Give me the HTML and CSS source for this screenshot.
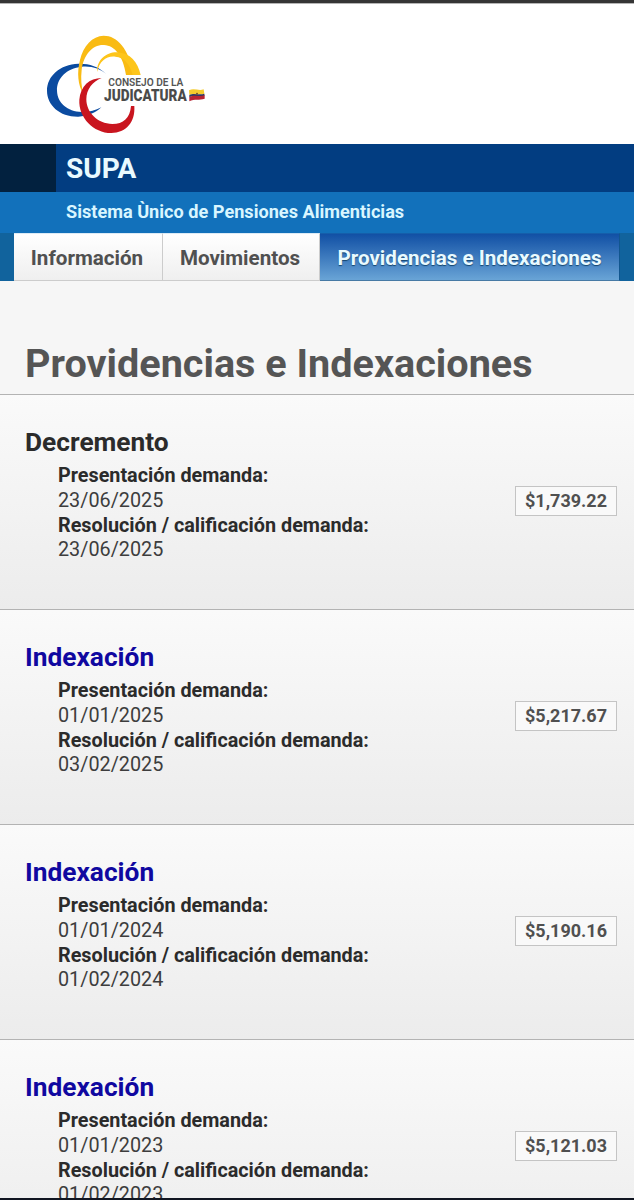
FILE: index.html
```html
<!DOCTYPE html>
<html lang="es">
<head>
	<meta charset="utf-8">
	<title>SUPA - Providencias e Indexaciones</title>
	<link rel="stylesheet" href="styles.css">
</head>
<body>
	<div class="page">
		<header class="logo-bar">
			<svg class="logo" viewBox="0 0 600 375" role="img" aria-label="Consejo de la Judicatura">
				<path fill="#0b4ba0" d="M230 163C205 138 175 130 145 131C90 133 51 168 51 212C51 256 90 291 145 290C173 289 197 278 214 262C195 272 175 277 155 276C112 274 82 249 81 212C80 175 109 145 155 140C185 137 210 146 230 163Z"/>
				<path fill="#f9bb13" d="M160 222C144 195 140 158 150 120C160 77 187 48 221 47C262 47 296 85 312 165L288 165C280 110 255 76 222 75C188 73 160 105 155 150C152 175 154 200 160 222Z"/>
				<path fill="#fdc51b" d="M201 156C200 120 228 96 262 97C301 99 323 126 332 165L308 165C300 132 283 113 256 110C229 107 209 123 201 156Z"/>
				<path fill="#c9151f" d="M215 174C178 174 151 199 148 239C145 292 190 339 244 339C288 338 316 308 313 258L303 258C300 295 280 312 247 312C202 311 169 277 169 238C169 208 187 185 215 174Z"/>
				<text class="logo-small" x="235" y="198" textLength="225" lengthAdjust="spacingAndGlyphs">CONSEJO DE LA</text>
				<text class="logo-big" x="222" y="243" textLength="248" lengthAdjust="spacingAndGlyphs">JUDICATURA</text>
				<path fill="#f4cb2d" d="M477 211C492 203 506 214 521 208L523 221C507 227 493 217 478 225Z"/>
				<path fill="#313a61" d="M478 225C493 217 507 227 523 221L524 227C508 233 494 223 478 232Z"/>
				<path fill="#b82433" d="M478 231C494 222 508 232 524 226L524 236C508 242 494 235 478 244Z"/>
				<circle cx="501" cy="221" r="3" fill="#70502c"/>
			</svg>
		</header>

		<div class="title-bar">
			<div class="title-mark"></div>
			<div class="title">SUPA</div>
		</div>
		<div class="subtitle">Sistema Ùnico de Pensiones Alimenticias</div>

		<nav class="tabs">
			<a class="tab tab-info">Información</a>
			<a class="tab tab-mov">Movimientos</a>
			<a class="tab tab-active">Providencias e Indexaciones</a>
		</nav>

		<h1 class="heading">Providencias e Indexaciones</h1>

		<section class="row">
			<div>
				<h2>Decremento</h2>
				<dl>
					<dt>Presentación demanda:</dt>
					<dd>23/06/2025</dd>
					<dt>Resolución / calificación demanda:</dt>
					<dd>23/06/2025</dd>
				</dl>
			</div>
			<span class="amount">$1,739.22</span>
		</section>
		<section class="row">
			<div>
				<h2 class="link">Indexación</h2>
				<dl>
					<dt>Presentación demanda:</dt>
					<dd>01/01/2025</dd>
					<dt>Resolución / calificación demanda:</dt>
					<dd>03/02/2025</dd>
				</dl>
			</div>
			<span class="amount">$5,217.67</span>
		</section>
		<section class="row">
			<div>
				<h2 class="link">Indexación</h2>
				<dl>
					<dt>Presentación demanda:</dt>
					<dd>01/01/2024</dd>
					<dt>Resolución / calificación demanda:</dt>
					<dd>01/02/2024</dd>
				</dl>
			</div>
			<span class="amount">$5,190.16</span>
		</section>
		<section class="row">
			<div>
				<h2 class="link">Indexación</h2>
				<dl>
					<dt>Presentación demanda:</dt>
					<dd>01/01/2023</dd>
					<dt>Resolución / calificación demanda:</dt>
					<dd>01/02/2023</dd>
				</dl>
			</div>
			<span class="amount">$5,121.03</span>
		</section>
	</div>
</body>
</html>
```
FILE: styles.css
```css
* {
    box-sizing: border-box;
}

html, body {
    height: 100%;
    margin: 0;
    padding: 0;
}

body {
    font-family: Roboto, "Liberation Sans", sans-serif;
    color: #2b2b2b;
    overflow: hidden;
}

.page {
    height: 1200px;
    overflow: hidden;
    background: #f6f6f6;
    border-top: 3px solid #353535;
    border-bottom: 2px solid #101521;
}

.logo-bar {
    height: 141px;
    padding: 17px 0 0 30px;
    background: #fff;
    border-top: 1px solid #b5b5b5;
}

.logo {
    display: block;
    width: 200px;
    height: 125px;
    margin-top: -1px;
}

.logo-small, .logo-big {
    fill: #555;
    font-weight: 600;
    font-size: 30px;
}

.logo-big {
    fill: #4a4a4a;
    font-weight: 900;
    font-size: 48px;
}

.title-bar {
    display: flex;
    height: 48px;
    background: #023d81;
}

.title-mark {
    width: 56px;
    background: #02213f;
}

.title {
    padding-left: 10px;
    font-size: 28px;
    font-weight: 700;
    line-height: 50px;
    color: #e9faff;
}

.subtitle {
    height: 41px;
    padding-left: 66px;
    background: #1271bb;
    color: #d9f6ff;
    font-size: 18.15px;
    font-weight: 700;
    line-height: 39px;
}

.tabs {
    display: flex;
    height: 48px;
    padding: 0 14px;
    background: #11639d;
}

.tab {
    height: 48px;
    border: 1px solid #ccc;
    border-width: 1px 1px 1px 0;
    border-top-color: #dcebf6;
    background: linear-gradient(#fff, #efefef);
    color: #505050;
    font-size: 20.6px;
    font-weight: 700;
    line-height: 48px;
    text-align: center;
}

.tab-info {
    width: 149px;
    padding-right: 2px;
}

.tab-mov {
    width: 157px;
    padding-right: 2px;
}

.tab-active {
    flex: 1;
    border-color: #155eaa #11568f #477aa5 #155eaa;
    background: linear-gradient(#1150a5, #69a4d6);
    color: #e9faff;
    text-shadow: 0 1px 1px #14456f;
}

.heading {
    height: 113px;
    margin: 0;
    padding: 59px 0 0 25px;
    color: #555;
    font-size: 39.6px;
    font-weight: 700;
    line-height: 48px;
}

.row {
    display: flex;
    justify-content: space-between;
    align-items: center;
    height: 215px;
    padding: 0 17px 0 25px;
    border-top: 1px solid #b3b3b3;
    background: linear-gradient(#fafafa, #ececec);
}

.row h2 {
    margin: 0;
    font-size: 26.3px;
    font-weight: 700;
    line-height: 36px;
}

.row .link {
    color: #1008a0;
}

.row dl {
    margin: 0 0 17px 33px;
    padding-top: 4px;
    font-size: 19.8px;
    line-height: 24.8px;
}

.row dt {
    font-weight: 700;
}

.row dd {
    margin: 0;
    color: #3d3d3d;
}

.amount {
    width: 102px;
    height: 30px;
    margin-bottom: 2px;
    border: 1px solid #c4c4c4;
    background: #f9f9f9;
    color: #505050;
    font-size: 18px;
    font-weight: 700;
    line-height: 27px;
    text-align: center;
}
```
